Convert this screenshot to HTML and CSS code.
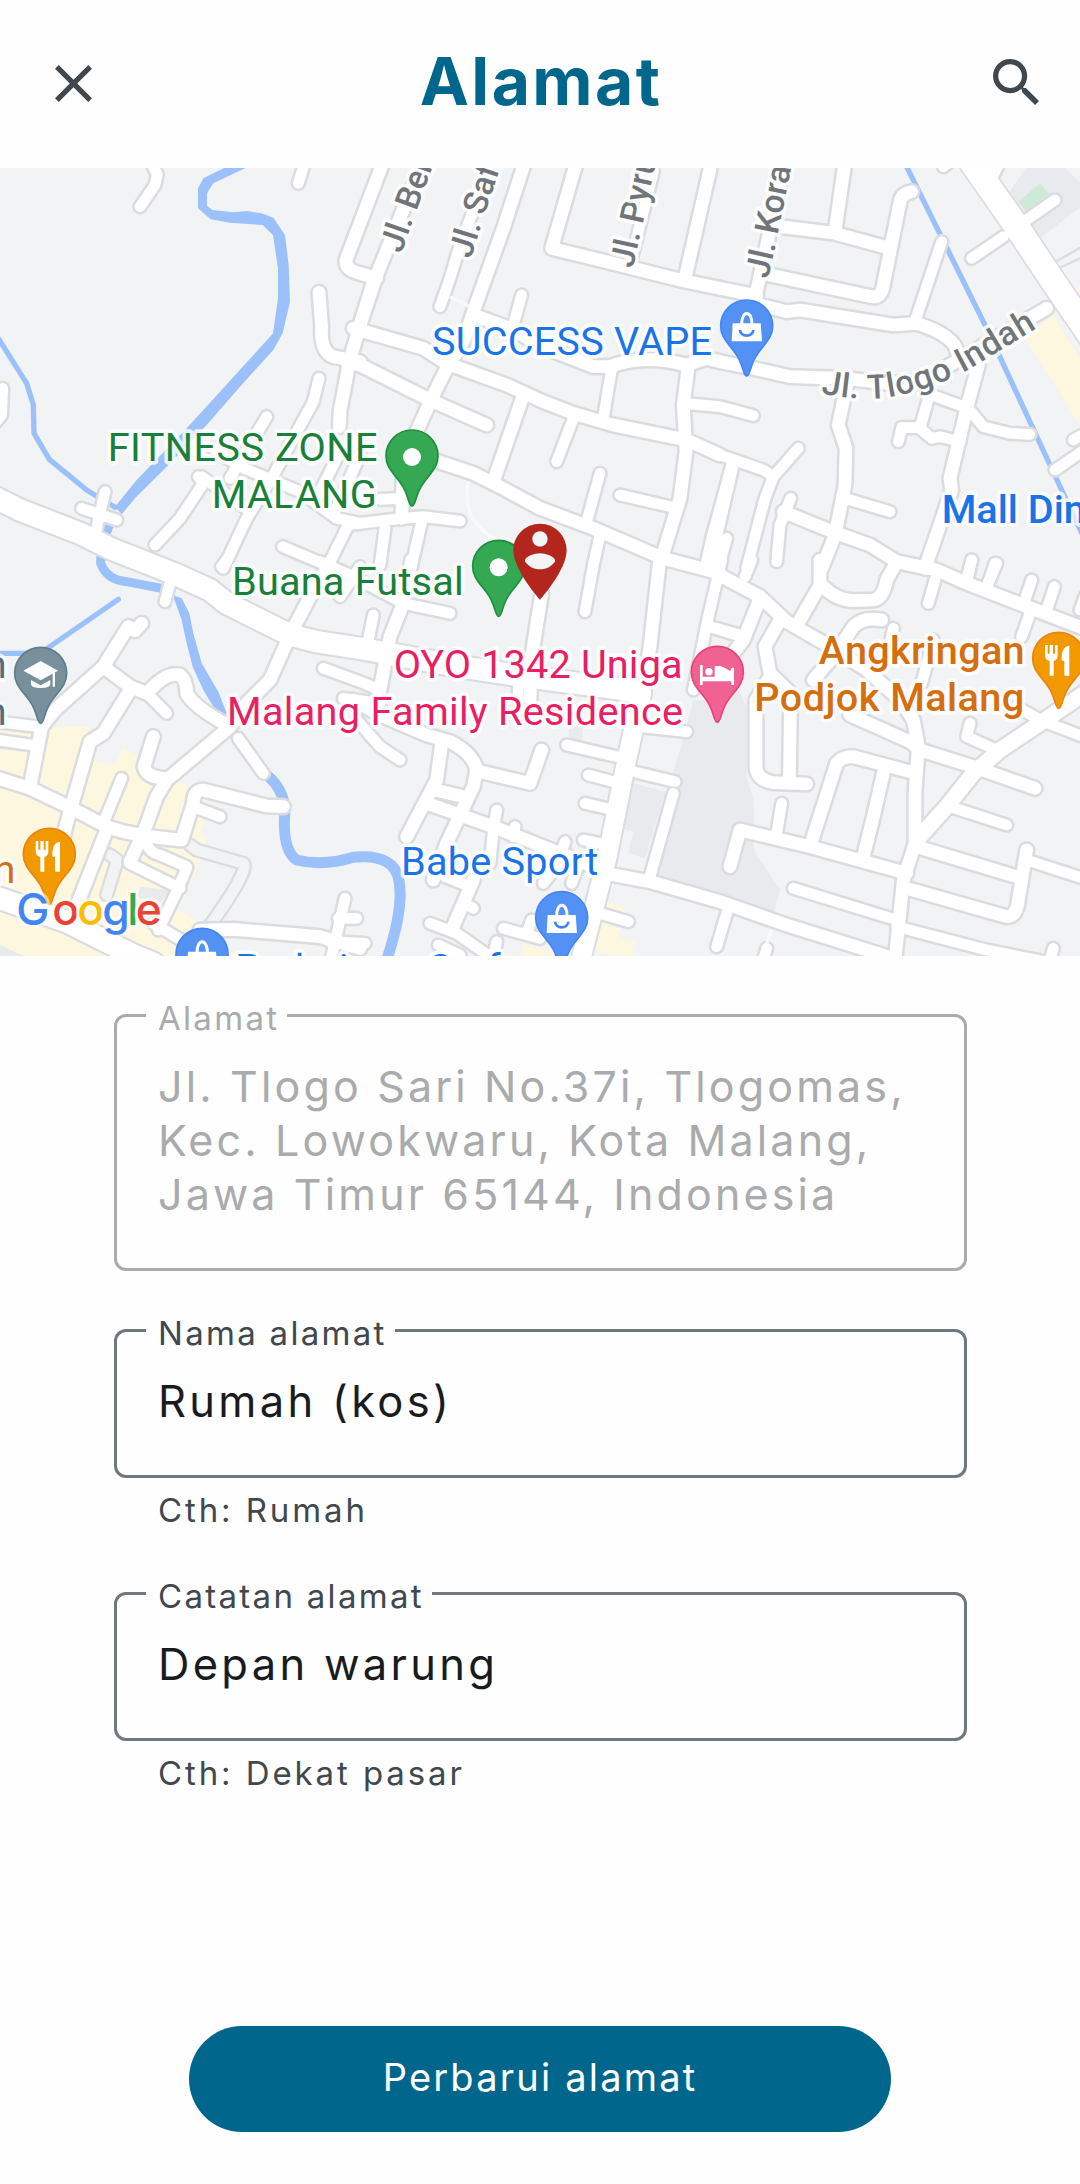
FILE: index.html
```html
<!DOCTYPE html>
<html lang="id">
<head>
<meta charset="utf-8">
<title>Alamat</title>
<link rel="stylesheet" href="styles.css">
</head>
<body>
<div class="screen">
  <header class="bar">
    <button class="icon-btn" aria-label="Tutup">
      <svg class="icon-close" viewBox="5 5 14 14"><path d="M19 6.41L17.59 5 12 10.59 6.41 5 5 6.41 10.59 12 5 17.59 6.41 19 12 13.41 17.59 19 19 17.59 13.41 12z"/></svg>
    </button>
    <h1 class="title">Alamat</h1>
    <button class="icon-btn" aria-label="Cari">
      <svg class="icon-search" viewBox="3 3 17.49 17.49"><path d="M15.5 14h-.79l-.28-.27C15.41 12.59 16 11.11 16 9.5 16 5.91 13.09 3 9.5 3S3 5.91 3 9.5 5.91 16 9.5 16c1.61 0 3.09-.59 4.23-1.57l.27.28v.79l5 4.99L20.49 19l-4.99-5zm-6 0C7.01 14 5 11.99 5 9.5S7.01 5 9.5 5 14 7.01 14 9.5 11.99 14 9.5 14z"/></svg>
    </button>
  </header>

  <svg class="map" viewBox="0 504 3240 2364">
    <defs>
      <g id="roads">
        <g transform="translate(0 495)">
          <path d="M455 -5L472 28 465 60 420 125M915 -10L895 55"/>
          <path class="m" d="M957 382L965 485Q960 560 1000 575L1080 590M1120 350L1080 480 1048 590 1020 740 1018 785"/>
          <path d="M957 640L940 710 880 820 815 940 740 1060 670 1210M800 755L690 940M595 935L610 955 540 1060 465 1140M605 935L745 1035M640 850L720 905 900 980 1010 1060 1080 1075M1010 880L950 1000M1080 870L1000 1050M848 1145L990 1205M1045 1080L985 1200"/>
          <path d="M315 980L285 1110M245 1030L350 1065M8 670L5 750-20 780"/>
          <path class="l" d="M-30 990L60 1035 240 1105 330 1150 520 1225 630 1275 680 1315 870 1410 950 1430 1080 1450 1380 1505 1580 1535 1920 1580"/>
        </g>
        <g transform="translate(1080 495)">
          <path class="m" d="M70 -10L-42 285Q-45 315 0 325L50 340M160 60L50 330 0 480M650 -10L575 250 780 300 960 345 1080 370M1055 -10L975 340M490 690L400 950M985 600L970 720 978 860 960 1000 905 1180"/>
          <path d="M370 60L300 240 270 340 240 425M485 390L460 480M755 610L730 760M640 760L590 890M720 925L680 1070M780 990L930 1025M970 715L1080 725 1180 752M880 20L810 300"/>
          <path class="m" d="M495 -10L430 190 340 440 310 530 265 600 215 700 170 800 130 900 125 1060M-20 490L190 550 260 595 440 660 550 710 640 745 760 780 980 825 1080 870M-40 590L0 600 210 705 380 780M340 450L450 490 560 550 700 605 750 605Q850 565 980 600L1040 580 1080 590M220 885L340 925 410 960 540 1030 700 1090 910 1180 1080 1225"/>
          <path d="M-35 1078L0 1075 125 1060 190 1055 300 1068M75 1090L60 1200M185 1070L155 1200 130 1320M60 1003L130 1000M720 1110L700 1200 675 1340M1115 900L1055 1120 1035 1210"/>
        </g>
        <g transform="translate(2160 495)">
          <path class="m" d="M195 -10L105 400M0 370L110 392M375 -10L345 200M185 185L345 205 510 250M575 80Q545 85 540 110L488 370Q480 400 455 395L150 330M120 420L200 440 240 435 520 480 590 475Q700 510 712 560"/>
          <path d="M665 230L585 470M840 -10L810 50M670 5L690 -10M1005 105L900 178M850 215L755 280"/>
          <path class="xl" d="M740 -30L880 170 1000 350 1130 540"/>
          <path class="m" d="M980 430L690 600 600 650 500 655 370 640 210 635 100 610 0 590M775 600L740 730 690 940 695 975 670 1050 625 1180 615 1210M380 660L355 780 378 850 375 960 345 1110 305 1210M190 1040L350 1105 450 1140 530 1190 620 1210"/>
          <path d="M620 685L745 730 790 785 870 805 930 808M625 700L600 790 635 820 660 815 720 830M605 788L545 788 535 830M375 1000L510 1040M212 1000L180 1080 170 1190M235 850L160 935M0 870L130 915 160 935 135 1000 80 1210M40 900L-30 1200M20 1120L0 1190M1060 825L1095 805M1005 915L1100 850M755 1185L740 1250M825 1195L800 1270"/>
        </g>
        <g transform="translate(0 1680)">
          <path d="M515 50L495 125M680 0L665 20M960 5L1050 45 1210 130 1350 160M1080 20L1020 110M970 325L1080 365 1140 390M1030 415L1140 430M715 535L790 640M-10 485L115 500M-10 540L95 555M365 655L310 790M580 740L660 770M1035 1015L995 1190M1070 1075L1015 1075M990 1145L1095 1150"/>
          <path class="m" d="M990 10L930 110 870 225 810 360 740 430 690 500 500 660 470 710 430 820 390 905M425 190L405 212 385 200 310 320 165 450 125 500 90 680M310 320L390 380 440 400M390 390L310 520 270 545 200 790 185 850M450 390Q500 335 540 345Q560 360 560 400Q580 440 690 500M-20 650L90 685 215 745 320 800 370 815 450 830 540 840M460 530L432 620Q440 655 500 655M850 740L800 738 610 690Q580 690 580 730L545 840M320 810L225 1050M600 1110L700 1108 960 1130 1080 1165"/>
          <path d="M440 400L500 460M388 910L540 985M560 925L530 995 475 1110M440 850Q450 880 480 885L560 920M460 1090L560 1150"/>
          <path class="l" d="M-30 1005L200 1085 400 1185 460 1210"/>
        </g>
        <g transform="translate(1080 1680)">
          <path class="m" d="M155 0L130 130 90 230 60 390M-20 420L60 465 200 525 270 545Q340 580 350 630L340 680 260 850 220 960M245 550L230 660 140 830M225 690L310 710M200 730L400 800 600 880 700 920M360 635L510 670 545 570M900 -10L870 260 850 400M545 100L515 290 510 420M340 960L275 1110"/>
          <path d="M40 165L25 240M-10 480L60 560 120 600M475 350V420M410 750L400 810 390 910M465 800L460 830M615 845L590 920 550 970M670 840L720 850M635 970L660 900M980 515L840 500M620 555L770 590M945 665L820 635M685 645L760 665M675 730L740 745M1085 0L1045 170 1000 390M1050 200L1145 230M255 950L330 980M310 1030L340 1045M210 1090L290 1120 390 1190M235 1155L300 1185M430 1105L540 1135M515 1080L500 1120M410 1145L400 1190M720 1060L805 1085M940 700L870 950"/>
          <path class="l2" d="M845 400L800 600 740 900 680 1130 660 1210"/>
          <path class="m" d="M735 940L870 965 1080 1025 1280 1095 1600 1195"/>
        </g>
        <g transform="translate(2160 1680)">
          <path class="m" d="M-15 38L120 110 200 185 330 260 440 330 540 420 580 480 595 560 585 700 585 850 550 960 525 1200M120 115L70 240 0 330M180 180L135 260 150 340 212 400 208 670M150 350L108 420 108 620Q110 660 160 668L260 672M300 0L300 75 240 180M310 80Q350 120 400 122L460 120Q490 115 500 60L530 5 650 30 740 70 870 120 960 155 1090 205M485 180Q430 170 400 200L340 290 280 360M390 465L570 545 600 570 760 620 945 685M270 860L350 610Q365 590 400 590L570 635M490 640L460 770 430 890M30 920L60 810 270 860 560 940M590 860L890 950M560 985L860 1070Q890 1070 895 1020L920 870"/>
          <path d="M75 50L95 0M-10 205L70 228M645 60L625 130M755 0L740 60M830 10L800 80M935 60L915 120M1003 80L980 150M1080 150L1095 110M930 160L905 230M520 205L510 250M640 240L605 370M750 490L740 530 830 570M890 440L960 480 1090 530M690 740L860 795M185 730L170 820M220 985L530 1080M920 900L1090 955M530 1100L800 1170 1000 1210M1000 1165L990 1200M20 1060L-10 1160M140 1165L130 1200"/>
          <path class="m2" d="M1100 395L960 490 840 570 760 640 680 740 590 840"/>
        </g>
      </g>
      <path id="pin" d="M0 150C-12 150-8 115-35 80C-60 47-78 32-78 0A78 78 0 0 1 78 0C78 32 60 47 35 80C8 115 12 150 0 150Z"/>
      <g id="bag">
        <path class="white" d="M-42-8H42L46 46H-45Z"/>
        <path class="ln" d="M-15-6C-15-48 16-48 16-6"/>
        <path class="smile" d="M-20 12A20 17 0 0 0 20 12"/>
      </g>
      <g id="meal" class="white">
        <path d="M-41-40h8v26h6v-26h10v26h6v-26h8v32q0 12-12 16v44h-12v-44q-14-4-14-16z"/>
        <path d="M32-38v90h-15v-45h-8c0-25 3-42 23-45z"/>
      </g>
      <path id="p-ber" d="M1204 762L1238 665 1340 385"/>
      <path id="p-saf" d="M1412 778L1442 680 1550 355"/>
      <path id="p-pyr" d="M1898 806L1926 680 1998 350"/>
      <path id="p-kor" d="M2304 838L2326 740 2400 370"/>
      <path id="p-tlo" d="M2462 1180Q2560 1200 2640 1195Q2770 1180 2900 1112L3160 955"/>
    </defs>

    <rect class="land" y="504" width="3240" height="2364"/>

    <g class="grey">
      <path d="M3080 500H3190L3250 555V615L3120 715 3025 580Z"/>
      <path d="M2080 2100H2160L2210 2060 2240 2120 2240 2330 2260 2400 2262 2550 2341 2670 2320 2740 2160 2685 1970 2630 2040 2370 2015 2330 2048 2220Z"/>
      <path d="M1900 2350L1995 2375 1935 2575 1885 2560 1900 2495 1865 2485ZM1710 2180H1750L1745 2220H1705Z"/>
    </g>
    <path class="park" d="M3055 605L3120 550 3150 585 3080 635Z"/>
    <g class="sand">
      <path d="M3075 1015L3160 945 3250 1090V1290ZM3215 875L3250 850V930Z"/>
      <path d="M0 2140L150 2180H270V2280L345 2295 370 2245 420 2270 470 2340 540 2345 640 2415 600 2500 622 2520 580 2640 490 2660 500 2710 600 2770 720 2880H310L0 2780Z"/>
      <path d="M1805 2700L1878 2725 1870 2750 1800 2730ZM1785 2765L1860 2785 1858 2810 1905 2825 1895 2880 1770 2850ZM1570 2830L1660 2855V2880H1560Z"/>
    </g>
    <path class="grey" d="M0 2835L310 2848 290 2880H0ZM420 2660L510 2670 480 2710 410 2690Z"/>
    <path class="sand" d="M0 2730L310 2848 290 2880H100L0 2836Z"/>

    <g class="water">
      <path class="fill" d="M690 495L610 535 594 565V625L632 658 690 668 788 675 819 705 834 805V895L819 1000 765 1060 660 1175 560 1285 410 1440 345 1520 365 1543 405 1495 500 1400 620 1275 720 1160 820 1050 848 1000 870 905 866 795 855 705 820 653 785 640 740 633 700 637 637 630 621 617V580L640 550 745 500Z"/>
      <path class="w1" d="M-5 1015L80 1150 100 1215 102 1300 148 1378 260 1470 345 1522M-5 1960H120L355 1798M2710 480L2960 985 3150 1395 3255 1620"/>
      <path class="w2" d="M330 1570L303 1640 302 1690Q320 1740 380 1745L500 1768"/>
      <path class="fill" d="M518 1785L545 1795 568 1840 580 1900 605 1990 655 2075 680 2140 676 2150 640 2120 610 2070 578 2000 560 1930 545 1860Z"/>
      <path class="w3" d="M800 2325Q850 2365 855 2430Q845 2550 890 2580Q970 2600 1060 2572Q1190 2560 1198 2650Q1210 2730 1160 2880"/>
    </g>

    <path class="lane-edge" d="M3150 795L3250 738M3165 810L3250 770"/>
    <path class="ghost-edge" d="M570 2535L590 2550 730 2590Q750 2610 620 2790M330 2565L352 2580 320 2685"/>
    <path class="ghost" d="M570 2535L590 2550 730 2590Q750 2610 620 2790M330 2565L352 2580 320 2685"/>

    <use href="#roads" class="edge"/>
    <use href="#roads" class="road"/>
    <path class="trail" d="M1405 1445Q1380 1560 1490 1620M1350 890L1410 920M2315 2790L2300 2830"/>

    <g class="street">
      <text><textPath href="#p-ber">Jl. Berlian</textPath></text>
      <text><textPath href="#p-saf">Jl. Safir</textPath></text>
      <text><textPath href="#p-pyr">Jl. Pyrus</textPath></text>
      <text><textPath href="#p-kor">Jl. Koral</textPath></text>
      <text textLength="700"><textPath href="#p-tlo" textLength="700">Jl. Tlogo Indah</textPath></text>
    </g>

    <g class="pins">
      <use href="#pin" x="1236" y="1368" class="green"/><circle class="white" cx="1236" cy="1371" r="27"/>
      <use href="#pin" x="1496" y="1699" class="green"/><circle class="white" cx="1496" cy="1702" r="27"/>
      <use href="#pin" x="2240" y="978" class="blue"/><use href="#bag" x="2240" y="978"/>
      <use href="#pin" x="1685" y="2753" class="blue"/><use href="#bag" x="1685" y="2753"/>
      <use href="#pin" x="606" y="2863" class="blue"/><use href="#bag" x="606" y="2863"/>
      <use href="#pin" x="148" y="2563" class="orange"/><use href="#meal" x="148" y="2563"/>
      <use href="#pin" x="3176" y="1975" class="orange"/><use href="#meal" x="3176" y="1975"/>
      <use href="#pin" x="122" y="2020" class="slate"/>
      <g class="white" transform="translate(122 2020)"><path d="M-52-8L0-37 52-8 0 21ZM36-2h7v42h-7zM-29 20L0 36 29 20V32Q29 44 0 44Q-29 44-29 32Z"/></g>
      <use href="#pin" x="2152" y="2017" class="pink"/>
      <g class="white" transform="translate(2152 2017)"><path d="M-52-22h8V13h36V-19H10Q28-12 38-4L44-14h6V38h-8V27H-44V38h-8Z"/><circle cx="-25" cy="-2" r="11"/></g>
    </g>

    <g class="poi">
      <text class="c-blue" x="1296" y="1065" textLength="840">SUCCESS VAPE</text>
      <text class="c-green" x="323" y="1383" textLength="810">FITNESS ZONE</text>
      <text class="c-green" x="635" y="1525" textLength="495">MALANG</text>
      <text class="c-green" x="696" y="1784" textLength="695">Buana Futsal</text>
      <text class="c-pink" x="1181" y="2033" textLength="867">OYO 1342 Uniga</text>
      <text class="c-pink" x="681" y="2175" textLength="1368">Malang Family Residence</text>
      <text class="c-orange medium" x="2456" y="1992" textLength="618">Angkringan</text>
      <text class="c-orange medium" x="2263" y="2133" textLength="810">Podjok Malang</text>
      <text class="c-blue" x="1203" y="2625" textLength="592">Babe Sport</text>
      <text class="c-blue medium" x="2825" y="1570">Mall Dinoyo</text>
      <text class="c-blue" x="706" y="2946">Padmi</text>
      <text class="c-blue" x="1280" y="2946">Craf</text>
      <text class="c-slate" x="20" y="2035" text-anchor="end">n</text>
      <text class="c-slate" x="20" y="2175" text-anchor="end">n</text>
      <text class="c-orange" x="46" y="2648" text-anchor="end">n</text>
    </g>

    <path class="me" transform="translate(1482.8 1548.1) scale(11.43)" d="M12 2C8.14 2 5 5.14 5 9c0 5.25 7 13 7 13s7-7.75 7-13c0-3.86-3.14-7-7-7zm0 2c1.1 0 2 .9 2 2 0 1.11-.9 2-2 2s-2-.89-2-2c0-1.1.9-2 2-2zm0 10c-1.67 0-3.14-.85-4-2.15.02-1.32 2.67-2.05 4-2.05s3.98.73 4 2.05c-.86 1.3-2.33 2.15-4 2.15z"/>

    <text class="google" y="2775"><tspan x="49" class="g-b">G</tspan><tspan x="157" class="g-r">o</tspan><tspan x="232" class="g-y">o</tspan><tspan x="307" class="g-b">g</tspan><tspan x="382" class="g-g">l</tspan><tspan x="407" class="g-r">e</tspan></text>
  </svg>

  <form class="form">
    <fieldset class="field field--off">
      <legend>Alamat</legend>
      <p class="value">Jl. Tlogo Sari No.37i, Tlogomas, Kec. Lowokwaru, Kota Malang, Jawa Timur 65144, Indonesia</p>
    </fieldset>
    <div class="group">
      <fieldset class="field">
        <legend>Nama alamat</legend>
        <p class="value">Rumah (kos)</p>
      </fieldset>
      <p class="hint">Cth: Rumah</p>
    </div>
    <div class="group">
      <fieldset class="field">
        <legend>Catatan alamat</legend>
        <p class="value">Depan warung</p>
      </fieldset>
      <p class="hint">Cth: Dekat pasar</p>
    </div>
    <button type="button" class="submit">Perbarui alamat</button>
  </form>
</div>
</body>
</html>
```
FILE: styles.css
```css
* { box-sizing: border-box; }

body {
  margin: 0;
  background: #fefefe;
  font-family: Inter, "Open Sans", sans-serif;
}

.screen {
  display: flex;
  flex-direction: column;
  width: 1080px;
  height: 2184px;
}

/* Top bar */
.bar {
  display: flex;
  align-items: center;
  justify-content: space-between;
  height: 168px;
  padding: 0 41px 4px 55px;
}
.icon-btn {
  display: flex;
  padding: 0;
  border: 0;
  background: none;
  fill: #40484d;
}
.icon-close { width: 37px; height: 37px; margin: 3px 9px 0 0; }
.icon-search { width: 46px; height: 46px; }
.title {
  margin: 0;
  padding: 0 12px 3px 0;
  color: #00668b;
  font-size: 66px;
  font-weight: 650;
  line-height: 80px;
  letter-spacing: 2.4px;
}

/* Map */
.map {
  display: block;
  flex: none;
  width: 1080px;
  height: 788px;
  overflow: hidden;
}
.land { fill: #f1f3f4; }
.grey { fill: #e8eaed; }
.park { fill: #ceead6; }
.sand { fill: #fef7e0; }
.water { fill: none; stroke: #9cc0f9; stroke-linejoin: round; }
.water .fill { fill: #9cc0f9; stroke: none; }
.w1 { stroke-width: 16; stroke-linecap: round; }
.w2 { stroke-width: 27; }
.w3 { stroke-width: 33; }

.edge, .road, .ghost, .ghost-edge { fill: none; stroke-linecap: round; stroke-linejoin: round; }
.edge { stroke: #dadce0; stroke-width: 47px; --m: 53px; --m2: 60px; --l: 77px; --l2: 68px; --xl: 84px; }
.road { stroke: #fff; stroke-width: 32px; --m: 38px; --m2: 46px; --l: 64px; --l2: 56px; --xl: 74px; }
.m { stroke-width: var(--m); }
.m2 { stroke-width: var(--m2); }
.l { stroke-width: var(--l); }
.l2 { stroke-width: var(--l2); }
.xl { stroke-width: var(--xl); }
.ghost-edge { stroke: #dadce0; stroke-width: 46px; }
.ghost { stroke: #f1f3f4; stroke-width: 32px; }
.lane-edge { stroke: #dadce0; stroke-width: 7px; }
.trail { fill: none; stroke: #f8f9fa; stroke-width: 10px; }

.street, .poi {
  font-family: Roboto, sans-serif;
  paint-order: stroke;
  stroke: rgba(255, 255, 255, 0.8);
  stroke-width: 22px;
  stroke-linejoin: round;
}
.street { fill: #70757a; font-size: 101px; font-weight: 500; }
.poi { font-size: 119px; }
.medium { font-weight: 500; }
.c-blue { fill: #1a73e8; }
.c-green { fill: #188038; }
.c-pink { fill: #e91e63; }
.c-orange { fill: #d56e0c; }
.c-slate { fill: #546e7a; }

.pins { stroke-width: 5px; }
.white { fill: #fff; stroke: none; }
.ln { fill: none; stroke: #fff; stroke-width: 9px; }
.smile { fill: none; stroke: #4285f4; stroke-width: 8px; }
.green { fill: #34a853; stroke: #1e8e3e; }
.blue { fill: #5491f5; stroke: #4285f4; }
.orange { fill: #f29900; stroke: #e8850c; }
.slate { fill: #78909c; stroke: #607d8b; }
.pink { fill: #f06292; stroke: #ec407a; }
.me { fill: #b3261e; }

.google {
  font-family: Inter, sans-serif;
  font-size: 133px;
  font-weight: 500;
  paint-order: stroke;
  stroke: rgba(255, 255, 255, 0.55);
  stroke-width: 20px;
}
.g-b { fill: #4285f4; }
.g-r { fill: #ea4335; }
.g-y { fill: #fbbc04; }
.g-g { fill: #34a853; }

/* Form */
.form {
  display: flex;
  flex: 1;
  flex-direction: column;
  padding: 41px 113px 52px 114px;
}
.field {
  min-width: 0;
  height: 166px;
  margin: 0;
  padding: 25px 30px 0 41px;
  border: 3px solid #70787d;
  border-radius: 12px;
  color: #191c1e;
}
.field legend {
  margin-left: -12px;
  padding: 5px 8px 0 12px;
  color: #40484d;
  font-size: 33px;
  line-height: 32px;
  letter-spacing: 2.3px;
}
.field--off { height: 274px; border-color: #a9abac; color: #a9abac; }
.field--off legend { color: #a9abac; }
.value {
  margin: 0;
  font-size: 43.5px;
  line-height: 54px;
  letter-spacing: 3.3px;
}
.field--off .value { font-size: 43px; letter-spacing: 3.15px; }
.group { margin-top: 41px; }
.group + .group { margin-top: 44px; }
.hint {
  margin: 11px 0 0 44px;
  color: #40484d;
  font-size: 33px;
  line-height: 42px;
  letter-spacing: 2.9px;
}
.submit {
  align-self: center;
  width: 702px;
  height: 106px;
  margin-top: auto;
  margin-right: 1px;
  padding: 0 0 4px;
  border: 0;
  border-radius: 53px;
  background: #00668b;
  color: #fff;
  font: 400 38px Inter, sans-serif;
  letter-spacing: 2.2px;
}
```
